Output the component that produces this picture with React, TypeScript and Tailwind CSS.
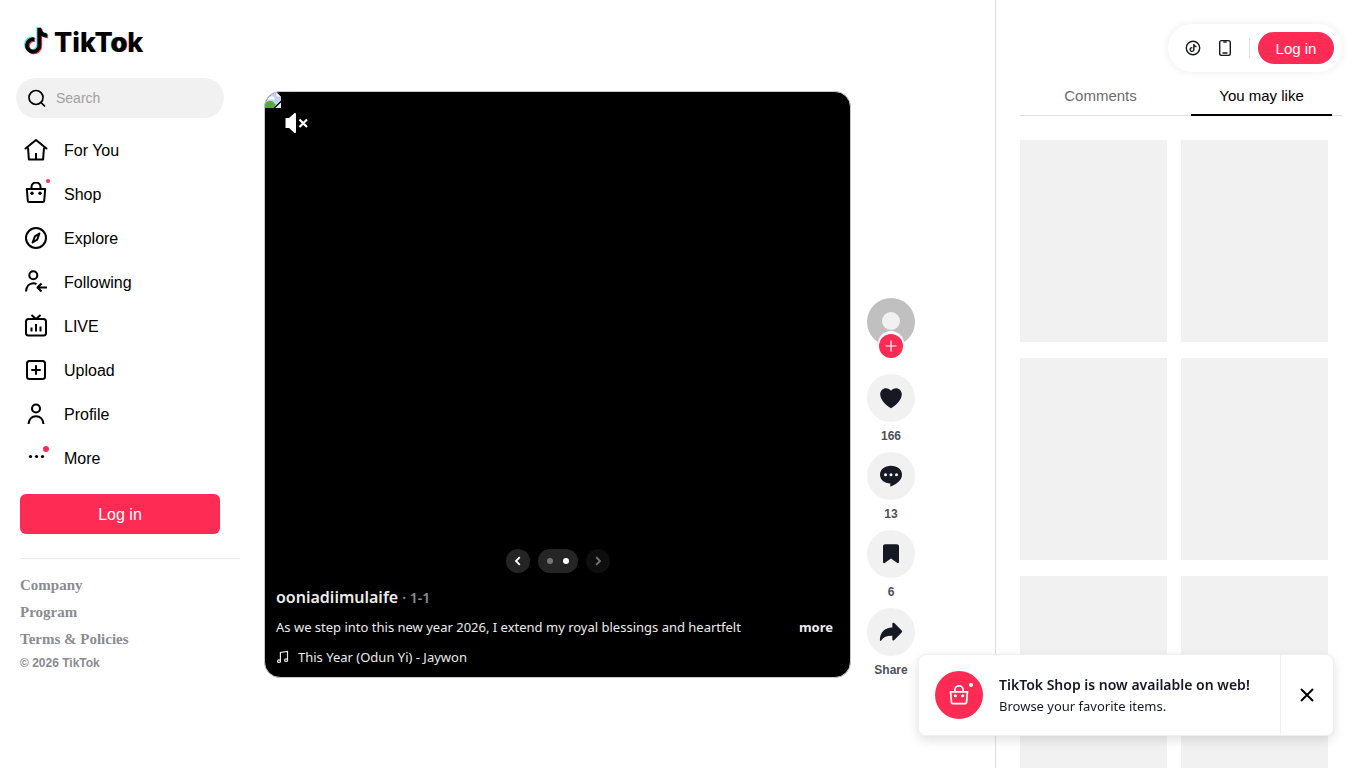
import React from "react";

const NOTE =
  "M12.525.02c1.31-.02 2.61-.01 3.91-.02.08 1.53.63 3.09 1.75 4.17 1.12 1.11 2.7 1.62 4.24 1.79v4.03c-1.44-.05-2.89-.35-4.2-.97-.57-.26-1.1-.59-1.62-.93-.01 2.92.01 5.84-.02 8.75-.08 1.4-.54 2.79-1.35 3.94-1.31 1.92-3.58 3.17-5.91 3.21-1.43.08-2.86-.31-4.08-1.03-2.02-1.19-3.44-3.37-3.65-5.71-.02-.5-.03-1-.01-1.49.18-1.9 1.12-3.72 2.58-4.96 1.66-1.44 3.98-2.13 6.15-1.72.02 1.48-.04 2.96-.04 4.44-.99-.32-2.15-.23-3.02.37-.63.41-1.11 1.04-1.36 1.75-.21.51-.15 1.07-.14 1.61.24 1.64 1.82 3.02 3.5 2.87 1.12-.01 2.19-.66 2.77-1.61.19-.33.4-.67.41-1.06.1-1.79.06-3.57.07-5.36.01-4.03-.01-8.05.02-12.07z";

const LOGO_NOTE = "M10.500 13.300a6.200 6.200 0 1 0 5.100 6.100V2c.4 4.500 3.200 7.200 7.800 7.500";

function Stroke({ children, width = 2 }: { children: React.ReactNode; width?: number }) {
  return (
    <svg
      className="size-6"
      viewBox="0 0 24 24"
      fill="none"
      stroke="currentColor"
      strokeWidth={width}
      strokeLinecap="round"
      strokeLinejoin="round"
      aria-hidden="true"
    >
      {children}
    </svg>
  );
}

function BagShape() {
  return (
    <>
      <path d="M2.800 8.500h18.400l-1 11.700a1.400 1.400 0 0 1-1.400 1.300H5.200a1.400 1.400 0 0 1-1.400-1.300z" />
      <path d="M7.500 8.500V6.500a4.500 4.500 0 0 1 9 0v2" />
      <circle cx="8" cy="12.800" r="1.700" fill="currentColor" stroke="none" />
      <circle cx="16" cy="12.800" r="1.700" fill="currentColor" stroke="none" />
    </>
  );
}

const navItems: { label: string; icon: React.ReactNode; dot?: "small" | "large" }[] = [
  {
    label: "For You",
    icon: (
      <Stroke>
        <path d="M1.500 10.500 12 2l10.500 8.500" />
        <path d="M4 9.500 4.900 21.500h14.200L20 9.500M12 15v6" strokeLinecap="butt" />
      </Stroke>
    ),
  },
  { label: "Shop", icon: <Stroke><g transform="translate(0 -1.500)"><BagShape /></g></Stroke>, dot: "small" },
  {
    label: "Explore",
    icon: (
      <Stroke>
        <circle cx="12" cy="12" r="10" />
        <path d="m15.400 7.500-4.500 2.800-2.300 6.200 4.600-2.800z" />
      </Stroke>
    ),
  },
  {
    label: "Following",
    icon: (
      <Stroke width={2.100}>
        <circle cx="9.300" cy="5.300" r="4" />
        <path d="M2 21.500c.4-5.200 3.400-8.200 7.300-8.200 1.200 0 2.300.3 3.200.8M23 17.500h-9M17.500 13.500l-4 4 4 4" strokeLinecap="butt" />
      </Stroke>
    ),
  },
  {
    label: "LIVE",
    icon: (
      <Stroke>
        <rect x="2" y="5" width="20" height="16.500" rx="2.500" />
        <path d="m7.500 1 4.500 4 4.500-4M7.500 13.500v4M12 10v7.500M16.500 12.500v5" strokeLinecap="butt" />
      </Stroke>
    ),
  },
  {
    label: "Upload",
    icon: (
      <Stroke>
        <rect x="3" y="3" width="18" height="18" rx="2.500" />
        <path d="M12 8v8M8 12h8" />
      </Stroke>
    ),
  },
  {
    label: "Profile",
    icon: (
      <Stroke width={2.100}>
        <circle cx="12" cy="6.500" r="4" />
        <path d="M4.500 22c.4-5 3.600-7.800 7.500-7.800s7.100 2.800 7.500 7.800" strokeLinecap="butt" />
      </Stroke>
    ),
  },
  {
    label: "More",
    icon: (
      <svg className="size-6" viewBox="0 0 24 24" aria-hidden="true">
        <circle cx="6.500" cy="10.500" r="1.600" />
        <circle cx="12.500" cy="10.500" r="1.600" />
        <circle cx="18.500" cy="10.500" r="1.600" />
      </svg>
    ),
    dot: "large",
  },
];

function Sidebar() {
  return (
    <aside className="flex w-60 shrink-0 flex-col pt-6">
      <a href="#" aria-label="TikTok" className="ml-6 flex h-[34px] items-center gap-1">
        <svg className="h-[30px] w-[26px]" viewBox="0 0 26 30" fill="none" strokeWidth="3.800" strokeLinejoin="bevel" aria-hidden="true">
          <path d={LOGO_NOTE} stroke="#25f4ee" transform="translate(-1.300 -0.800)" />
          <path d={LOGO_NOTE} stroke="#fe2c55" transform="translate(0.700 0.800)" />
          <path d={LOGO_NOTE} stroke="#000" transform="translate(-0.300 0)" />
        </svg>
        <span className="pt-1 font-[Inter,sans-serif] text-[27px] leading-8 font-extrabold">
          TikT<span className="[text-shadow:-1px_0_0_#25f4ee,1px_0_0_#fe2c55]">o</span>k
        </span>
      </a>
      <label className="mx-4 mt-5 flex h-10 items-center gap-2 rounded-full bg-[#f1f1f1] px-2">
        <Stroke width={1.700}>
          <circle cx="12" cy="11.500" r="7" />
          <path d="m17 16.500 3.500 3.500" />
        </Stroke>
        <input
          type="search"
          aria-label="Search"
          placeholder="Search"
          className="min-w-0 flex-1 bg-transparent text-sm outline-none placeholder:text-[#a0a0a0]"
        />
      </label>
      <nav className="mt-2.5">
        {navItems.map((item) => (
          <a key={item.label} href="#" className="flex h-11 items-center gap-4 pl-6 text-base">
            <span className="relative">
              {item.icon}
              {item.dot === "small" && <span className="absolute -top-[3px] -right-0.5 size-1 rounded-full bg-[#fe2c55]" />}
              {item.dot === "large" && <span className="absolute top-0 -right-px size-1.5 rounded-full bg-[#fe2c55]" />}
            </span>
            <span className="pt-0.5">{item.label}</span>
          </a>
        ))}
      </nav>
      <button className="mx-5 mt-3.5 h-10 rounded-md bg-[#fe2c55] pt-0.5 text-base text-white">Log in</button>
      <footer className="mt-6 ml-5 border-t border-[#ececec] pt-[13px] text-[#8a8b91]">
        <ul className="font-['Liberation_Serif',serif] text-[15px] leading-[27px] font-bold">
          <li><a href="#">Company</a></li>
          <li><a href="#">Program</a></li>
          <li><a href="#">Terms &amp; Policies</a></li>
        </ul>
        <p className="text-xs leading-5 font-bold">© 2026 TikTok</p>
      </footer>
    </aside>
  );
}

function BrokenImage() {
  return (
    <svg className="size-4" viewBox="0 0 16 16" role="img" aria-label="Photo">
      <path d="M0 0h11l5 5v11H0z" fill="#c4d5f5" />
      <path d="M11 0v5h5z" fill="#fff" stroke="#b5b5b5" strokeWidth="0.600" />
      <path d="M3 7.500c0-2 1.500-2 2-2.500 2-1.500 4-.5 4 1 1 .2 1 1.500 0 1.500z" fill="#fff" />
      <path d="M0 16v-4c3-4 7-4 9-1l2 2-3 3z" fill="#55a946" />
      <path d="M8.500 16 16 8.500v2L10.500 16z" fill="#000" />
      <path d="M10.500 16l5.500-5.500V16z" fill="#e8eef9" />
    </svg>
  );
}

function Player() {
  return (
    <article className="flex aspect-square min-w-0 flex-1 flex-col overflow-hidden rounded-2xl border border-[#c8c8c8] bg-black text-white">
      <BrokenImage />
      <button aria-label="Unmute" className="mt-px ml-5 w-6">
        <svg className="h-7 w-6" viewBox="0 0 24 28" aria-hidden="true">
          <path d="M0.500 9H4l5.300-4.800c.7-.6 1.700-.2 1.700.8v18c0 1-1 1.400-1.700.8L4 19H.5z" fill="#fff" />
          <path d="m14.500 10.500 7.500 7.500m0-7.500-7.500 7.500" stroke="#fff" strokeWidth="2.200" />
        </svg>
      </button>
      <div className="mt-auto flex justify-center gap-2">
        <button aria-label="Previous photo" className="flex size-6 items-center justify-center rounded-full bg-[#252525]">
          <svg className="size-3" viewBox="0 0 12 12" fill="none" stroke="#fff" strokeWidth="1.800" aria-hidden="true"><path d="M7.800 2.200 4 6l3.800 3.800" /></svg>
        </button>
        <div className="flex h-6 w-10 items-center justify-center gap-2.5 rounded-full bg-[#252525]">
          <span className="size-1.5 rounded-full bg-[#777]" />
          <span className="size-1.5 rounded-full bg-white" />
        </div>
        <button disabled aria-label="Next photo" className="flex size-6 items-center justify-center rounded-full bg-[#0e0e0e]">
          <svg className="size-3" viewBox="0 0 12 12" fill="none" stroke="#777" strokeWidth="1.800" aria-hidden="true"><path d="M4.200 2.200 8 6 4.200 9.800" /></svg>
        </button>
      </div>
      <div className="px-[11px] pt-3 pb-2 font-['Noto_Sans','Open_Sans',sans-serif] text-[#ececec]">
        <h1 className="flex items-baseline gap-1 text-base leading-6 font-semibold">
          <a href="#">ooniadiimulaife</a>
          <span className="text-sm text-[#8c8c8c]">· 1-1</span>
        </h1>
        <div className="mt-1.5 flex items-center justify-between pr-1.5 text-[13px] leading-6">
          <p>As we step into this new year 2026, I extend my royal blessings and heartfelt</p>
          <button className="text-[13px] font-bold">more</button>
        </div>
        <a href="#" className="mt-1.5 flex items-center gap-2 text-[13px] leading-6">
          <svg className="size-3.5" viewBox="0 0 14 14" fill="none" stroke="currentColor" strokeWidth="1.200" aria-hidden="true">
            <path d="M4.400 11V2.500L11.500 1.500V10" />
            <ellipse cx="3" cy="11.200" rx="1.500" ry="1.300" />
            <ellipse cx="10.100" cy="10.200" rx="1.500" ry="1.300" />
          </svg>
          This Year (Odun Yi) - Jaywon
        </a>
      </div>
    </article>
  );
}

const actions: { label: string; name: string; icon: React.ReactNode }[] = [
  {
    name: "Like",
    label: "166",
    icon: <path d="M12 22.300C8 20 1.200 14.500 1.200 8.300 1.200 4.800 3.800 2.200 7 2.200c2 0 3.900 1 5 2.600 1.100-1.600 3-2.600 5-2.600 3.200 0 5.800 2.600 5.800 6.100 0 6.200-6.800 11.700-10.800 14z" />,
  },
  {
    name: "Comments",
    label: "13",
    icon: (
      <>
        <path d="M12 1.800C5.700 1.800 1 5.600 1 10.800s4.500 8.600 10.300 8.700v3.200c5.500-2.200 11.700-6.200 11.700-12 0-5.200-4.700-8.900-11-8.900z" />
        <circle cx="6.500" cy="10.700" r="1.500" fill="#fff" />
        <circle cx="12" cy="10.700" r="1.500" fill="#fff" />
        <circle cx="17.500" cy="10.700" r="1.500" fill="#fff" />
      </>
    ),
  },
  {
    name: "Save",
    label: "6",
    icon: <path d="M4 4.300C4 3 5 2.300 6.200 2.300h11.600c1.200 0 2.200.7 2.200 2v15.800c0 .9-.9 1.400-1.600.8L12 16.500l-6.400 4.400c-.7.600-1.600.1-1.600-.8z" />,
  },
  {
    name: "Share",
    label: "Share",
    icon: <path d="M13.300 4c0-1.200 1.100-1.700 2-1l7.400 7.600c.6.600.6 1.300 0 1.900l-7.400 7.600c-.8.800-2 .3-2-.9v-3.400C8.500 15.600 4.500 16.800 2.200 20.500c-.5.700-1.400.4-1.300-.5C1 12.500 5.500 7.800 13.300 7.500z" />,
  },
];

function Actions() {
  return (
    <div className="flex w-12 shrink-0 flex-col items-center gap-2 self-end">
      <div className="mb-2 flex flex-col items-center">
        <a href="#" aria-label="ooniadiimulaife" className="flex size-12 items-center justify-center rounded-full bg-[#c0c0c0]">
          <span className="mb-0.5 size-[18px] rounded-full bg-[#f1f1f1]" />
        </a>
        <button
          aria-label="Follow"
          className="relative -mt-3 flex size-6 items-center justify-center rounded-full bg-[#fe2c55] shadow-[0_-2px_0_1px_#ffffff]"
        >
          <svg className="size-3" viewBox="0 0 12 12" stroke="#fff" strokeWidth="1.200" aria-hidden="true"><path d="M6 .5v11M.5 6h11" /></svg>
        </button>
      </div>
      {actions.map((action) => (
        <button key={action.name} aria-label={action.name} className="flex flex-col items-center gap-1.5">
          <span className="flex size-12 items-center justify-center rounded-full bg-[#f1f1f1]">
            <svg className="size-6 fill-[#161823]" viewBox="0 0 24 24" aria-hidden="true">{action.icon}</svg>
          </span>
          <span className="text-xs leading-4 font-bold text-[#505058]">{action.label}</span>
        </button>
      ))}
    </div>
  );
}

function RightPanel() {
  return (
    <aside className="w-[371px] shrink-0 overflow-hidden border-l border-[#dfdfdf] px-6 pt-6">
      <div className="ml-auto flex h-12 w-fit items-center rounded-full pr-2 pl-4 shadow-[0_0_8px_rgba(0,0,0,0.08)]">
        <a href="#" aria-label="Get coins">
          <svg className="size-[18px]" viewBox="0 0 18 18" aria-hidden="true">
            <circle cx="9" cy="9" r="6.700" fill="none" stroke="#161823" strokeWidth="1.400" />
            <g transform="translate(4.900 4.900) scale(0.340)"><path d={NOTE} fill="#161823" /></g>
          </svg>
        </a>
        <a href="#" aria-label="Get app" className="mr-[15px] ml-3.5">
          <svg className="size-[18px]" viewBox="0 0 18 18" fill="none" stroke="#161823" strokeWidth="1.400" aria-hidden="true">
            <rect x="3.700" y="1.600" width="10.600" height="14.800" rx="1.800" />
            <path d="M7.800 3h2.400M7 14h4" strokeLinecap="round" />
          </svg>
        </a>
        <span className="mr-2 h-5 w-px bg-[#e0e2e4]" />
        <button className="h-8 w-[76px] rounded-full bg-[#fe2c55] pt-0.5 text-[15px] text-white">Log in</button>
      </div>
      <div role="tablist" className="mt-1 grid h-10 grid-cols-2 border-b border-[#dfdfdf] text-[15px]">
        <button role="tab" aria-selected="false" className="pt-0.5 text-[#6b6b6f]">Comments</button>
        <button role="tab" aria-selected="true" className="mx-2.5 -mb-px border-b-2 border-black pt-0.5">You may like</button>
      </div>
      <div className="mt-6 grid grid-cols-2 gap-x-3.5 gap-y-4 pr-3.5">
        {[1, 2, 3, 4, 5, 6].map((n) => (
          <div key={n} className="h-[202px] bg-[#f1f1f1]" />
        ))}
      </div>
    </aside>
  );
}

function Toast() {
  return (
    <section className="fixed right-8 bottom-8 flex items-center rounded-lg border border-[#f0f0f0] bg-white font-['Noto_Sans','Open_Sans',sans-serif] shadow-[0_4px_12px_rgba(0,0,0,0.12)]">
      <div className="flex w-[361px] items-center gap-4 p-4">
        <span className="relative flex size-12 shrink-0 items-center justify-center rounded-full bg-[#fe2c55] text-white">
          <svg className="size-[22px]" viewBox="0 0 24 24" fill="none" stroke="currentColor" strokeWidth="1.900" aria-hidden="true"><BagShape /></svg>
          <span className="absolute top-3 right-2.5 size-1 rounded-full bg-white" />
        </span>
        <div className="whitespace-nowrap text-[#161823]">
          <h2 className="text-sm leading-[22px] font-semibold">TikTok Shop is now available on web!</h2>
          <p className="text-[13px] leading-5">Browse your favorite items.</p>
        </div>
      </div>
      <button aria-label="Close" className="flex w-[53px] items-center justify-center self-stretch border-l border-[#f0f0f0]">
        <svg className="size-4" viewBox="0 0 16 16" stroke="#000" strokeWidth="2" aria-hidden="true"><path d="m2 2 12 12M14 2 2 14" /></svg>
      </button>
    </section>
  );
}

export default function App() {
  return (
    <div className="flex h-screen overflow-hidden bg-white font-['Liberation_Sans',Arial,sans-serif] text-black">
      <Sidebar />
      <main className="flex min-w-0 flex-1 items-center pr-20 pl-6">
        <div className="flex min-w-0 flex-1 gap-4">
          <Player />
          <Actions />
        </div>
      </main>
      <RightPanel />
      <Toast />
    </div>
  );
}
